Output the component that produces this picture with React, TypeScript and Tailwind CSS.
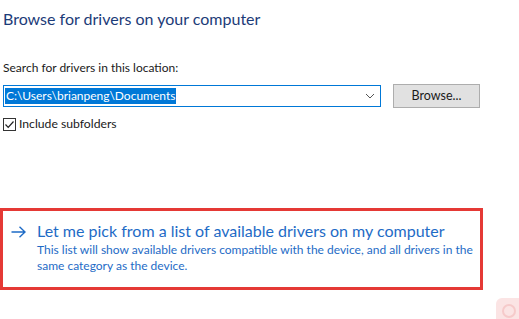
import React from "react";

export default function App() {
  return (
    <div
      className="w-[519px] h-[319px] bg-white relative overflow-hidden"
      style={{ fontFamily: 'Lato, "Noto Sans", sans-serif' }}
    >
      <div className="flex flex-col pl-[3px] pt-[8px]">
        <h1 className="text-[16px] leading-[22px] text-[#1c3b78] whitespace-nowrap">
          Browse for drivers on your computer
        </h1>
        <div className="mt-[30px] text-[12px] leading-[16px] text-[#1a1a1a] whitespace-nowrap">
          Search for drivers in this location:
        </div>
        <div className="mt-[8px] flex items-center">
          <div className="w-[378px] h-[22px] border border-[#0078d7] flex items-center pl-[1px] pr-[4px]">
            <span className="bg-[#0078d7] text-white text-[12px] leading-[16px] px-[1px] whitespace-nowrap">
              C:\Users\brianpeng\Documents
            </span>
            <div className="flex-1" />
            <svg width="10" height="6" viewBox="0 0 10 6" className="mr-[1px]">
              <path d="M1 1 L5 5 L9 1" fill="none" stroke="#555" strokeWidth="1" />
            </svg>
          </div>
          <button className="ml-[12px] w-[87px] h-[24px] bg-[#e1e1e1] border border-[#adadad] text-[12.5px] text-[#1a1a1a] leading-[16px]">
            Browse...
          </button>
        </div>
        <div className="mt-[8px] flex items-center">
          <div className="w-[13px] h-[13px] border border-[#333] flex items-center justify-center">
            <svg width="11" height="11" viewBox="0 0 11 11">
              <path d="M1.5 5.5 L4.2 8.3 L9.5 2.5" fill="none" stroke="#222" strokeWidth="1.2" />
            </svg>
          </div>
          <span className="ml-[3px] text-[12.2px] leading-[16px] text-[#1a1a1a] whitespace-nowrap">Include subfolders</span>
        </div>
      </div>
      <div className="mt-[76px] w-[483px] h-[82px] border-[3px] border-[#e53935] flex flex-col pl-[8px] pt-[11px]">
        <div className="flex items-center">
          <svg width="15" height="12" viewBox="0 0 15 12" className="mr-[11px] mt-[2px]">
            <path d="M0.5 6 H14 M8.5 0.8 L14 6 L8.5 11.2" fill="none" stroke="#1e6bc6" strokeWidth="1.4" />
          </svg>
          <span className="text-[16px] leading-[18px] text-[#1e6bc6] whitespace-nowrap">
            Let me pick from a list of available drivers on my computer
          </span>
        </div>
        <div className="pl-[26px] text-[12px] leading-[16px] text-[#1e6bc6] mt-[2px] whitespace-nowrap">
          This list will show available drivers compatible with the device, and all drivers in the
          <br />
          same category as the device.
        </div>
      </div>
      <div className="absolute left-[496px] top-[298px] w-[30px] h-[30px] rounded-[6px] bg-[#fbe4e4] flex items-center justify-center">
        <div className="w-[14px] h-[14px] rounded-full border-2 border-[#f6caca] -mt-[4px] -ml-[4px]" />
      </div>
    </div>
  );
}
